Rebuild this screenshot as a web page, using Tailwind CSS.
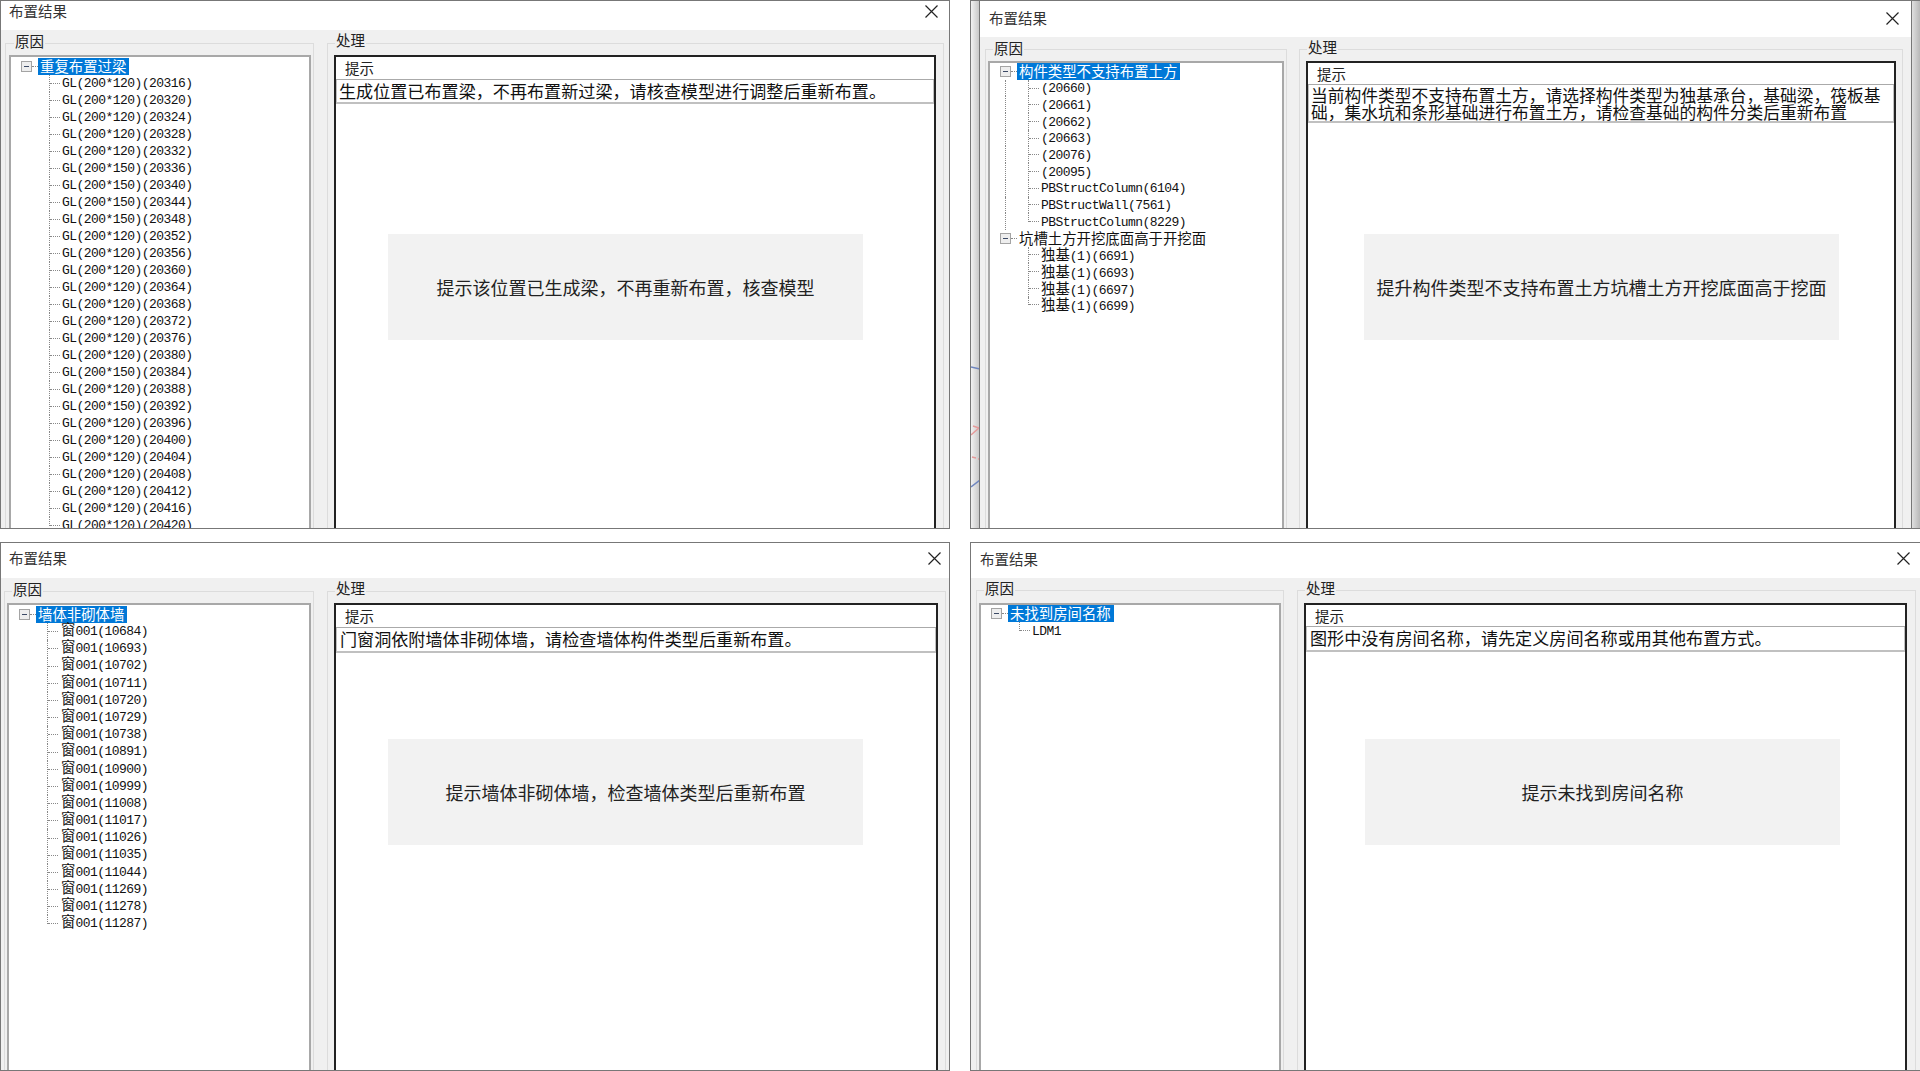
<!DOCTYPE html>
<html lang="zh-CN">
<head>
  <meta charset="UTF-8" />
  <title>布置结果</title>
  <script src="https://cdn.jsdelivr.net/npm/@tailwindcss/browser@4"></script>
</head>
<body class="relative w-[1920px] h-[1071px] overflow-hidden bg-white text-[#111] font-['Noto_Sans_CJK_SC',sans-serif]">

  <!-- strip of the desktop behind the top right window -->
  <div class="absolute left-[970px] top-0 w-[10px] h-[529px] border border-r-0 border-[#777] bg-linear-to-r from-[#f2f2f2] to-[#c4c4c4] overflow-hidden">
    <svg width="9" height="527" fill="none" stroke-width="1.5">
      <path d="M0 366l9 2" stroke="#6f86c0" />
      <path d="M0 434l9-8" stroke="#e59a9a" />
      <path d="M2 425l6 2M1 456l4 1M7 458l2 0" stroke="#e59a9a" />
      <path d="M0 486l9-7" stroke="#6f86c0" />
    </svg>
  </div>
  <div class="absolute left-[1911px] top-0 w-[9px] h-[529px] border-y border-[#777] bg-linear-to-r from-[#e4e4e4] to-[#b8b8b8]"></div>

  <!-- top left -->
  <section class="absolute left-0 top-0 w-[950px] h-[529px] border border-[#777] bg-white overflow-hidden flex flex-col">
    <header class="h-[29px] shrink-0 flex justify-between pl-[8px] pr-[11px]">
      <span class="text-[14.5px] leading-[20px] text-[#333]">布置结果</span>
      <svg class="mt-[4px]" width="13" height="13" viewBox="0 0 13 13" stroke="#222" stroke-width="1.2"><path d="M0.5 0.5l12 12M12.5 0.5l-12 12" /></svg>
    </header>
    <div class="flex-1 min-h-0 bg-[#f0f0f0] flex gap-[13px] pl-[4px] pt-[13px]">
      <div class="relative w-[309px] flex flex-col border border-b-0 border-[#dcdcdc] pl-[3px] pr-[2px] pt-[11px]">
        <span class="absolute left-[8px] -top-[13px] px-px bg-[#f0f0f0] text-[14.5px] leading-[20px] text-[#222]">原因</span>
        <div id="tree1" class="flex-1 bg-white border-2 border-b-0 border-[#a8a8a8] pt-px overflow-hidden"></div>
      </div>
      <div class="relative w-[617px] flex flex-col border border-b-0 border-[#dcdcdc] pl-[6px] pr-[7px] pt-[11px]">
        <span class="absolute left-[7px] -top-[14px] px-px bg-[#f0f0f0] text-[14.5px] leading-[20px] text-[#222]">处理</span>
        <div class="flex-1 bg-white border-2 border-b-0 border-[#222]">
          <div class="h-[23px] pl-[9px] border-b border-[#aaa] text-[14.5px] leading-[22px] text-[#222]">提示</div>
          <div class="h-[24px] pl-[2px] border-x border-b-2 border-[#c0c0c0] text-[17.1px] leading-[21px] whitespace-nowrap">生成位置已布置梁&#65292;不再布置新过梁&#65292;请核查模型进行调整后重新布置。</div>
        </div>
      </div>
    </div>
    <div class="absolute left-[387px] top-[233px] w-[475px] h-[106px] bg-[#f2f2f2] flex items-center justify-center text-[18px] text-[#222]">提示该位置已生成梁&#65292;不再重新布置&#65292;核查模型</div>
  </section>

  <!-- top right -->
  <section class="absolute left-[979px] top-0 w-[933px] h-[529px] border border-[#777] bg-white overflow-hidden flex flex-col">
    <header class="h-[36px] shrink-0 flex justify-between pl-[9px] pr-[12px] pt-[7px]">
      <span class="text-[14.5px] leading-[20px] text-[#333]">布置结果</span>
      <svg class="mt-[4px]" width="13" height="13" viewBox="0 0 13 13" stroke="#222" stroke-width="1.2"><path d="M0.5 0.5l12 12M12.5 0.5l-12 12" /></svg>
    </header>
    <div class="flex-1 min-h-0 bg-[#f0f0f0] flex gap-[12px] pl-[5px] pt-[12px]">
      <div class="relative w-[302px] flex flex-col border border-b-0 border-[#dcdcdc] pl-[2px] pr-[2px] pt-[11px]">
        <span class="absolute left-[7px] -top-[12px] px-px bg-[#f0f0f0] text-[14.5px] leading-[20px] text-[#222]">原因</span>
        <div id="tree2" class="flex-1 bg-white border-2 border-b-0 border-[#a8a8a8] overflow-hidden"></div>
      </div>
      <div class="relative w-[604px] flex flex-col border border-b-0 border-[#dcdcdc] pl-[6px] pr-[6px] pt-[11px]">
        <span class="absolute left-[7px] -top-[13px] px-px bg-[#f0f0f0] text-[14.5px] leading-[20px] text-[#222]">处理</span>
        <div class="flex-1 bg-white border-2 border-b-0 border-[#222]">
          <div class="h-[22px] pl-[9px] border-b border-[#aaa] text-[14.5px] leading-[21px] text-[#222]">提示</div>
          <div class="h-[38px] pl-[2px] border-x border-b-2 border-[#c0c0c0] text-[16.75px] leading-[16.5px] whitespace-nowrap pt-[2px]">当前构件类型不支持布置土方&#65292;请选择构件类型为独基承台&#65292;基础梁&#65292;筏板基<br />础&#65292;集水坑和条形基础进行布置土方&#65292;请检查基础的构件分类后重新布置</div>
        </div>
      </div>
    </div>
    <div class="absolute left-[384px] top-[233px] w-[475px] h-[106px] bg-[#f2f2f2] flex items-center justify-center text-[18px] text-[#222]">提升构件类型不支持布置土方坑槽土方开挖底面高于挖面</div>
  </section>

  <!-- bottom left -->
  <section class="absolute left-0 top-[542px] w-[950px] h-[529px] border border-[#777] bg-white overflow-hidden flex flex-col">
    <header class="h-[35px] shrink-0 flex justify-between pl-[8px] pr-[8px] pt-[5px]">
      <span class="text-[14.5px] leading-[20px] text-[#333]">布置结果</span>
      <svg class="mt-[4px]" width="13" height="13" viewBox="0 0 13 13" stroke="#222" stroke-width="1.2"><path d="M0.5 0.5l12 12M12.5 0.5l-12 12" /></svg>
    </header>
    <div class="flex-1 min-h-0 bg-[#f0f0f0] flex gap-[13px] pl-[3px] pt-[13px]">
      <div class="relative w-[310px] flex flex-col border border-b-0 border-[#dcdcdc] pl-[2px] pr-[2px] pt-[11px]">
        <span class="absolute left-[7px] -top-[13px] px-px bg-[#f0f0f0] text-[14.5px] leading-[20px] text-[#222]">原因</span>
        <div id="tree3" class="flex-1 bg-white border-2 border-b-0 border-[#a8a8a8] pt-px overflow-hidden"></div>
      </div>
      <div class="relative w-[619px] flex flex-col border border-b-0 border-[#dcdcdc] pl-[6px] pr-[7px] pt-[11px]">
        <span class="absolute left-[7px] -top-[14px] px-px bg-[#f0f0f0] text-[14.5px] leading-[20px] text-[#222]">处理</span>
        <div class="flex-1 bg-white border-2 border-b-0 border-[#222]">
          <div class="h-[23px] pl-[9px] border-b border-[#aaa] text-[14.5px] leading-[22px] text-[#222]">提示</div>
          <div class="h-[25px] pl-[3px] border-x border-b-2 border-[#c0c0c0] text-[17.1px] leading-[21px] whitespace-nowrap">门窗洞依附墙体非砌体墙&#65292;请检查墙体构件类型后重新布置。</div>
        </div>
      </div>
    </div>
    <div class="absolute left-[387px] top-[196px] w-[475px] h-[106px] bg-[#f2f2f2] flex items-center justify-center text-[18px] text-[#222]">提示墙体非砌体墙&#65292;检查墙体类型后重新布置</div>
  </section>

  <!-- bottom right, runs past the edge of the picture -->
  <section class="absolute left-[970px] top-[542px] w-[960px] h-[529px] border border-[#777] bg-white overflow-hidden flex flex-col">
    <header class="h-[35px] shrink-0 flex pl-[9px] pr-[10px] pt-[6px]">
      <span class="text-[14.5px] leading-[20px] text-[#333]">布置结果</span>
    </header>
    <svg class="absolute left-[926px] top-[9px]" width="13" height="13" viewBox="0 0 13 13" stroke="#222" stroke-width="1.2"><path d="M0.5 0.5l12 12M12.5 0.5l-12 12" /></svg>
    <div class="flex-1 min-h-0 bg-[#f0f0f0] flex gap-[13px] pl-[5px] pt-[12px]">
      <div class="relative w-[308px] flex flex-col border border-b-0 border-[#dcdcdc] pl-[2px] pr-[2px] pt-[12px]">
        <span class="absolute left-[7px] -top-[13px] px-px bg-[#f0f0f0] text-[14.5px] leading-[20px] text-[#222]">原因</span>
        <div id="tree4" class="flex-1 bg-white border-2 border-b-0 border-[#a8a8a8] overflow-hidden"></div>
      </div>
      <div class="relative w-[619px] flex flex-col border border-b-0 border-[#dcdcdc] pl-[6px] pr-[8px] pt-[12px]">
        <span class="absolute left-[7px] -top-[13px] px-px bg-[#f0f0f0] text-[14.5px] leading-[20px] text-[#222]">处理</span>
        <div class="flex-1 bg-white border-2 border-b-0 border-[#222]">
          <div class="h-[22px] pl-[9px] border-b border-[#aaa] text-[14.5px] leading-[21px] text-[#222]">提示</div>
          <div class="h-[25px] pl-[3px] border-x border-b-2 border-[#c0c0c0] text-[17.1px] leading-[21px] whitespace-nowrap">图形中没有房间名称&#65292;请先定义房间名称或用其他布置方式。</div>
        </div>
      </div>
    </div>
    <div class="absolute left-[394px] top-[196px] w-[475px] h-[106px] bg-[#f2f2f2] flex items-center justify-center text-[18px] text-[#222]">提示未找到房间名称</div>
  </section>

  <script>
    // half width text is mono, the Chinese in a row is a little larger
    function rowText(text) {
      return text.replace(/[\u4e00-\u9fff]+/g, (m) => `<span class="text-[14.4px] tracking-normal font-['Noto_Sans_CJK_SC',sans-serif]">${m}</span>`);
    }

    function rootRow(label, selected, rowClass) {
      const labelClass = selected ? "bg-[#0078d7] text-white" : "text-[#111]";
      return `<div class="${rowClass} flex items-center pl-[10px] whitespace-nowrap">
        <svg class="shrink-0" width="11" height="11" viewBox="0 0 11 11"><rect x="0.5" y="0.5" width="10" height="10" fill="#eeeeee" stroke="#a4a4a4" /><path d="M3 5.5h5" stroke="#3c4a66" stroke-width="1" /></svg>
        <span class="w-[6px] border-t border-dotted border-[#888]"></span>
        <span class="${labelClass} h-full pl-[2px] pr-[3px] text-[14.4px] leading-[16px]">${label}</span>
      </div>`;
    }

    function childRow(text, isLast, hasSibling, rowClass, shift) {
      const outer = hasSibling ? "border-[#888]" : "border-transparent";
      const inner = isLast ? "h-1/2 self-start" : "self-stretch";
      return `<div class="${rowClass} flex items-center whitespace-nowrap font-['Liberation_Mono','Noto_Sans_CJK_SC',monospace] text-[13px] tracking-[-0.55px]">
        <span class="ml-[15px] w-[23px] self-stretch border-l border-dotted ${outer}"></span>
        <span class="w-px border-l border-dotted border-[#888] ${inner}"></span>
        <span class="w-[10px] mr-[2px] border-t border-dotted border-[#888]"></span>
        <span class="${shift}">${rowText(text)}</span>
      </div>`;
    }

    function fillTree(id, groups, rowClass) {
      document.getElementById(id).innerHTML = groups.map((group, g) => {
        const hasSibling = g < groups.length - 1;
        const rows = group.items.map((text, i) => childRow(text, i === group.items.length - 1, hasSibling, rowClass, group.shift || ""));
        return rootRow(group.label, g === 0, rowClass) + rows.join("");
      }).join("");
    }

    const beams = [
      [20316, 120], [20320, 120], [20324, 120], [20328, 120], [20332, 120], [20336, 150], [20340, 150],
      [20344, 150], [20348, 150], [20352, 120], [20356, 120], [20360, 120], [20364, 120], [20368, 120],
      [20372, 120], [20376, 120], [20380, 120], [20384, 150], [20388, 120], [20392, 150], [20396, 120],
      [20400, 120], [20404, 120], [20408, 120], [20412, 120], [20416, 120], [20420, 120],
    ].map(([id, h]) => `GL(200*${h})(${id})`);

    const windows = [10684, 10693, 10702, 10711, 10720, 10729, 10738, 10891, 10900, 10999, 11008, 11017, 11026, 11035, 11044, 11269, 11278, 11287]
      .map((id) => `窗001(${id})`);

    fillTree("tree1", [{ label: "重复布置过梁", items: beams }], "h-[17px]");
    fillTree("tree2", [
      {
        label: "构件类型不支持布置土方",
        shift: "translate-y-px",
        items: ["(20660)", "(20661)", "(20662)", "(20663)", "(20076)", "(20095)", "PBStructColumn(6104)", "PBStructWall(7561)", "PBStructColumn(8229)"],
      },
      {
        label: "坑槽土方开挖底面高于开挖面",
        items: ["独基(1)(6691)", "独基(1)(6693)", "独基(1)(6697)", "独基(1)(6699)"],
      },
    ], "h-[16.7px]");
    fillTree("tree3", [{ label: "墙体非砌体墙", shift: "-translate-y-[2px] translate-x-px", items: windows }], "h-[17.2px]");
    fillTree("tree4", [{ label: "未找到房间名称", shift: "translate-y-px", items: ["LDM1"] }], "h-[17px]");
  </script>
</body>
</html>
